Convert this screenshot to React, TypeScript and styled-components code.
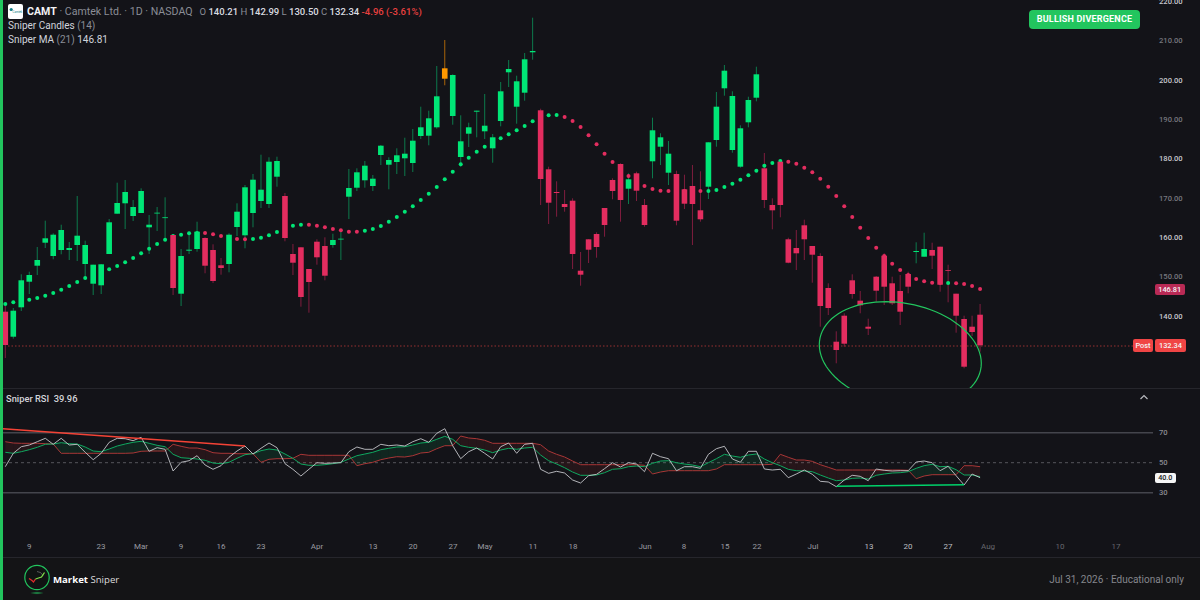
import React from 'react'
import styled, { createGlobalStyle } from 'styled-components'

const GlobalStyle = createGlobalStyle`
  html, body {
    margin: 0;
    padding: 0;
    width: 1200px;
    height: 600px;
    overflow: hidden;
    background: #131318;
    font-family: Roboto, "Liberation Sans", sans-serif;
  }
`

const GREEN = '#00e676'
const RED = '#e32d5f'
const ORANGE = '#ff9800'

const slot = (i: number) => 5.3 + 7.99 * i

// high, body top, body bottom, low, colour
type Candle = [number, number, number, number, string]
const CANDLES: Candle[] = [
  [306, 311.7, 345, 358, 'r'], [308, 310.7, 336.7, 338.7, 'g'], [274.3, 280.3, 307.3, 311, 'g'], [271.7, 275, 281.7, 294, 'g'],
  [247, 260, 265.7, 275, 'g'], [220.7, 238.3, 242.7, 248, 'g'], [233.3, 234.7, 256, 259.3, 'g'], [224.7, 230, 250, 254.3, 'g'],
  [242, 248, 250, 260, 'g'], [196, 235.7, 245, 261, 'g'], [240.7, 245, 264, 278.3, 'g'], [264.7, 264.7, 283.7, 295, 'g'],
  [264, 264.3, 285.3, 294, 'g'], [219, 222.3, 254, 254, 'g'], [182.7, 203, 213.7, 213.7, 'g'], [180, 192, 203.3, 229, 'g'],
  [200, 207, 216, 221, 'g'], [188.3, 191, 213, 213, 'g'], [215, 224.7, 227.3, 254, 'g'], [207, 212.7, 213.4, 231, 'g'],
  [197.3, 217.3, 218, 240, 'g'], [234, 235, 288, 295, 'r'], [249, 256, 293.7, 306, 'g'], [231.7, 249.7, 250.7, 254, 'g'],
  [221.7, 231.7, 249, 251.7, 'g'], [237.3, 238, 265.7, 273.3, 'r'], [244.3, 250, 281, 283, 'r'], [258, 265.3, 268, 274.7, 'r'],
  [233.3, 234.7, 264, 272.3, 'g'], [203.3, 211.7, 227, 236, 'g'], [185, 187.3, 235.3, 248.3, 'g'], [174, 179.7, 213, 227.3, 'g'],
  [154.7, 189.7, 201, 208, 'g'], [157.3, 161.7, 204, 208, 'g'], [156.7, 161, 176.7, 186.7, 'g'], [193, 196, 238, 241.3, 'r'],
  [244, 254, 262.7, 275, 'r'], [247.3, 247.3, 297, 306.7, 'r'], [269, 269, 282, 312.7, 'r'], [239.3, 241.7, 257.3, 264.7, 'r'],
  [237.3, 246, 275.7, 280.3, 'r'], [233.7, 240, 245, 247.7, 'g'], [230, 238.7, 239.4, 260, 'g'], [169, 188, 196.7, 219, 'g'],
  [168.3, 172.3, 187.7, 191, 'g'], [161, 165.7, 180.3, 187.7, 'g'], [175, 178.7, 186, 191, 'g'], [145, 145.7, 155, 165, 'g'],
  [157.3, 160, 164.7, 189.3, 'g'], [148.3, 155.3, 162, 174, 'g'], [137.7, 153.7, 158.3, 176, 'g'], [129, 140.7, 163, 172, 'g'],
  [106.7, 127.3, 136, 139, 'g'], [110.7, 118.3, 135.7, 145.3, 'g'], [66, 96.3, 127.3, 128.7, 'g'], [40, 68.3, 78.7, 85.3, 'o'],
  [74.3, 75, 116, 124.7, 'g'], [115.3, 141.3, 157, 166.7, 'g'], [122.7, 127.3, 133.7, 147, 'g'], [110.7, 110.7, 111.7, 137.3, 'g'],
  [94, 125.7, 131.3, 139, 'g'], [134, 137.3, 148.3, 162.7, 'g'], [82, 91.3, 121, 126.3, 'g'], [60, 69, 72.3, 87, 'g'],
  [75.7, 81.3, 106.7, 123.7, 'g'], [53, 59.3, 92.7, 100.7, 'g'], [17.7, 51, 52.3, 59.7, 'g'], [108.7, 110.3, 179, 205, 'r'],
  [166.7, 169.3, 202.7, 224, 'r'], [181.3, 192, 193, 216.7, 'r'], [190, 204, 207, 211.7, 'r'], [198.3, 200.7, 254, 269, 'r'],
  [252, 270.7, 274.7, 285.7, 'r'], [239.3, 239.3, 249.7, 263, 'r'], [232.3, 234, 247, 257.7, 'r'], [208, 208, 225, 236.7, 'r'],
  [178.3, 180, 191, 199.3, 'r'], [163.3, 164, 200, 221.7, 'r'], [173.3, 179.3, 188.7, 204, 'g'], [171.7, 173.3, 190.7, 201, 'r'],
  [199, 205, 225, 226.7, 'r'], [117.7, 130.3, 161.3, 178.3, 'g'], [133.3, 137.3, 146.7, 165, 'g'], [141, 153.7, 172.7, 185, 'g'],
  [170.7, 174, 220.7, 225.3, 'r'], [174.7, 189.3, 203.7, 209, 'r'], [165, 186, 204, 245, 'r'], [171.3, 210.3, 219.3, 221.7, 'r'],
  [142.3, 142.3, 186.7, 199, 'g'], [92, 106.7, 140, 146.7, 'g'], [65, 70.7, 88.3, 95.7, 'g'], [91.3, 96, 150, 152.7, 'g'],
  [125.3, 128.3, 166.7, 167.7, 'g'], [96.7, 100, 122.3, 127.3, 'g'], [66.7, 74.3, 97.7, 101.3, 'g'], [153, 168.3, 200, 208, 'r'],
  [198.3, 205, 210.3, 229.3, 'r'], [160, 161.7, 205, 217.3, 'r'], [237.7, 239.3, 262.7, 263.3, 'r'], [230, 248, 253.3, 270, 'r'],
  [219.7, 225.3, 239.3, 260, 'r'], [246, 246, 254.7, 282.7, 'r'], [253.3, 256, 306, 326.7, 'r'], [283.3, 288, 308, 315, 'r'],
  [331.3, 341.7, 350, 363.3, 'r'], [313.3, 315.7, 343.7, 346.7, 'r'], [274.3, 280.3, 294, 298.7, 'r'], [291, 300.7, 305.3, 313.3, 'r'],
  [318.7, 326.7, 328.7, 335, 'r'], [276, 276.7, 290.7, 301.7, 'r'], [253.3, 255.7, 286.7, 305, 'r'], [276.7, 283.3, 303.3, 305, 'r'],
  [275, 291, 311.7, 325, 'r'], [271.7, 274, 286.7, 293.3, 'r'], [242.3, 251, 252, 263.3, 'g'], [232.7, 249, 256.7, 256.7, 'g'],
  [242.7, 250, 255.7, 269, 'r'], [246.7, 246.7, 284.7, 291.7, 'r'], [264.7, 270, 270.7, 302.3, 'r'], [293.7, 293.7, 315.7, 332.7, 'r'],
  [315.7, 319, 366.7, 368.3, 'r'], [315.7, 326.7, 332, 336, 'r'], [304, 314.7, 345.3, 351.7, 'r'],
]

// moving average: y and colour for each slot
const MA_Y = [
  304, 302.3, 300.6, 299.7, 298, 295.7, 293, 289.7, 286, 282, 278, 275, 272, 269.3, 266, 262.3, 258, 253.3, 248.7, 244, 239.7, 236, 234.7, 233.3,
  233, 233, 234.3, 236, 237.5, 239, 239.3, 239, 237.7, 235.3, 232, 228.7, 225.7, 224.7, 224.7, 225.7, 227.3, 229, 230.3, 231.7, 231.7, 230.7, 229, 226, 221.7, 217,
  211.7, 206.3, 200, 193.7, 187, 179.3, 171.7, 164.3, 157.7, 151.7, 146.7, 142.7, 138.3, 134.3, 130.3, 126, 121.3, 117, 115.3, 115, 117, 121, 127, 135.3, 144.3, 153.7, 162, 169, 176, 181, 186, 189, 190.7, 191, 191, 191, 191, 191, 191, 190, 187, 183.7, 179.7, 175.3, 170.7, 165.7, 163, 161, 161.7, 163.7,
  167.7, 172.3, 178.7, 186.7, 196, 206.3, 217, 227.7, 238, 247.7, 256, 263.7, 270, 275, 279, 281.3, 282.7, 283, 283, 283.3, 284, 286, 289,
]
const MA_RED_RANGES = [[25, 30], [38, 44], [70, 87], [98, 117], [119, 122]]
const maColor = (i: number) => (MA_RED_RANGES.some(([a, b]) => i >= a && i <= b) ? RED : GREEN)

const from385 = (a: number[]) => a.map(z => 385 + z / 3)
const from410 = (a: number[]) => a.map(z => 410 + z / 3)

const RSI_WHITE = [
  ...from385([245, 205, 185, 180, 170, 160, 178, 160, 180, 178, 202, 224, 205, 172, 160, 161, 167, 157, 199, 188, 193, 258, 232, 227, 212, 240, 253, 242, 217, 198, 183, 207, 190, 174, 188, 236, 253, 273, 253, 233, 235, 234, 233, 200, 186, 193, 193, 178, 182, 180]),
  ...from410([108, 95, 86, 97, 70, 56, 107, 146, 125, 114, 130, 147, 110, 99, 130, 103, 100, 178, 190, 184, 189, 210, 219, 197, 193, 176, 158, 171, 158, 162, 185, 130, 140, 146, 182, 170, 170, 175, 133, 116, 109, 147, 157, 124, 124, 177, 180, 178, 203, 192]),
  ...from385([255, 268, 289, 291, 305, 285, 271, 274, 287, 252, 256, 258, 257, 257, 231, 228, 233, 257, 244, 272, 300, 267, 278]),
]
const RSI_GREEN = [
  ...from385([202, 205, 200, 194, 187, 178, 177, 173, 176, 177, 186, 198, 200, 192, 183, 177, 172, 169, 175, 181, 185, 208, 218, 220, 222, 226, 234, 236, 232, 220, 209, 206, 197, 192, 195, 207, 220, 237, 241, 241, 239, 236, 232, 222, 212, 207, 202, 194, 190, 186]),
  ...from410([110, 105, 99, 97, 88, 79, 88, 107, 112, 115, 120, 128, 120, 115, 118, 114, 112, 135, 152, 162, 173, 186, 196, 196, 195, 188, 178, 176, 170, 168, 170, 160, 153, 152, 158, 162, 165, 170, 158, 146, 133, 138, 142, 135, 132, 147, 158, 167, 178, 182]),
  ...from385([258, 260, 270, 279, 287, 285, 280, 279, 282, 271, 267, 264, 263, 260, 250, 242, 238, 245, 244, 254, 270, 270, 275]),
]
const RSI_RED = [
  ...from385([170, 174, 175, 175, 175, 176, 177, 205, 205, 205, 205, 205, 205, 205, 205, 205, 204, 199, 198, 198, 198, 178, 184, 189, 189, 194, 203, 205, 205, 206, 206, 206, 232, 223, 221, 221, 220, 208, 211, 211, 211, 211, 211, 211, 242, 236, 232, 224, 219, 215]),
  ...from410([141, 137, 129, 127, 116, 107, 107, 78, 84, 86, 91, 100, 100, 100, 100, 100, 100, 104, 123, 133, 141, 153, 164, 164, 164, 164, 164, 164, 164, 164, 166, 192, 186, 182, 182, 182, 182, 182, 182, 177, 164, 164, 164, 164, 164, 164, 163, 133, 142, 150]),
  ...from385([225, 229, 239, 247, 255, 255, 255, 255, 255, 255, 255, 255, 255, 256, 281, 273, 269, 269, 269, 269, 242, 242, 245]),
]

const line = (ys: number[]) => ys.map((y, i) => `${slot(i).toFixed(1)},${y.toFixed(1)}`).join(' ')

const PRICE_TICKS = ['220.00', '210.00', '200.00', '190.00', '180.00', '170.00', '160.00', '150.00', '140.00']
type Tone = 'normal' | 'bright' | 'dim'
const TIME_TICKS: [string, number, Tone][] = [
  ['9', 29.3, 'normal'], ['23', 101, 'normal'], ['Mar', 141, 'normal'], ['9', 181, 'normal'], ['16', 221, 'normal'], ['23', 261, 'normal'],
  ['Apr', 317, 'normal'], ['13', 373, 'normal'], ['20', 413, 'normal'], ['27', 453, 'normal'], ['May', 485, 'normal'], ['11', 533, 'normal'],
  ['18', 573, 'normal'], ['Jun', 645, 'normal'], ['8', 684, 'normal'], ['15', 725, 'normal'], ['22', 757, 'normal'], ['Jul', 813, 'normal'],
  ['13', 869, 'bright'], ['20', 908, 'bright'], ['27', 948, 'bright'], ['Aug', 988, 'dim'], ['10', 1060, 'dim'], ['17', 1116, 'dim'],
]
const TONES: Record<Tone, string> = { normal: '#9a9ba1', bright: '#bdbec2', dim: '#66676d' }

const Page = styled.div`
  display: flex;
  width: 1200px;
  height: 600px;
  background: #131318;
`

const SideBar = styled.div`
  width: 3px;
  flex: none;
  background: #22c55e;
`

const Column = styled.div`
  flex: 1;
  display: flex;
  flex-direction: column;
  min-width: 0;
`

const MainPane = styled.section`
  position: relative;
  height: 388px;
  overflow: hidden;
  border-bottom: 1px solid #26262c;
`

const RsiPane = styled.section`
  position: relative;
  height: 143px;
  overflow: hidden;
`

const ChartSvg = styled.svg`
  position: absolute;
  inset: 0;
  display: block;
`

const Legend = styled.div`
  position: absolute;
  top: 4px;
  left: 5px;
  display: flex;
  flex-direction: column;
`

const LegendRow = styled.div`
  display: flex;
  align-items: center;
  height: 14px;
  font-size: 10px;
  line-height: 14px;
  color: #d1d4dc;
  white-space: pre;
  &:first-child {
    height: 15px;
    font-size: 10.6px;
  }
`

const Ticker = styled.b`
  margin-left: 4px;
  font-size: 10.6px;
  font-weight: 700;
  color: #f2f2f4;
`

const Muted = styled.span`
  color: #8a8d96;
`

const Ohlc = styled.span`
  margin-left: 7px;
  font-size: 9.5px;
  font-weight: 500;
  color: #d9dbe0;
`

const OhlcKey = styled.span`
  font-weight: 400;
  color: #8a8d96;
`

const Loss = styled.span`
  font-size: 9.5px;
  font-weight: 500;
  color: #e8403f;
`

const SignalBadge = styled.div`
  position: absolute;
  top: 9.5px;
  left: 1026px;
  display: flex;
  align-items: center;
  justify-content: center;
  width: 111px;
  height: 19.5px;
  border-radius: 4px;
  background: #22c55e;
  color: #fff;
  font-size: 9px;
  font-weight: 700;
  letter-spacing: 0.2px;
`

const PriceAxis = styled.div`
  position: absolute;
  top: -18px;
  left: 1156px;
  display: flex;
  flex-direction: column;
`

const PriceTick = styled.span<{ $major: boolean }>`
  display: flex;
  align-items: center;
  height: 39.33px;
  font-size: 7.6px;
  font-weight: 500;
  color: ${props => (props.$major ? '#c8c9ce' : '#77787f')};
`

const PriceTag = styled.span<{ $bg: string; $top: number; $left: number; $w: number; $h: number }>`
  position: absolute;
  top: ${props => props.$top}px;
  left: ${props => props.$left}px;
  width: ${props => props.$w}px;
  height: ${props => props.$h}px;
  border-radius: 2px;
  background: ${props => props.$bg};
  color: #f4f4f6;
  font-size: 7.4px;
  font-weight: 500;
  line-height: ${props => props.$h}px;
  text-align: center;
`

const RsiTitle = styled.div`
  position: absolute;
  top: 3px;
  left: 3px;
  font-size: 9.3px;
  line-height: 13px;
  font-weight: 500;
  color: #d4d5da;
  white-space: pre;
`

const RsiAxis = styled.div`
  position: absolute;
  top: 28px;
  left: 1156px;
  display: flex;
  flex-direction: column;
`

const RsiTick = styled.span`
  display: flex;
  align-items: center;
  height: 30px;
  font-size: 7.6px;
  font-weight: 500;
  color: #8b8c93;
`

const RsiValue = styled.span`
  position: absolute;
  top: 83.7px;
  left: 1152px;
  width: 20.7px;
  height: 10.5px;
  border-radius: 2px;
  background: #f5f5f5;
  color: #222;
  font-size: 7.2px;
  font-weight: 500;
  line-height: 10.5px;
  text-align: center;
`

const CollapseIcon = styled.svg`
  position: absolute;
  top: 5px;
  left: 1136px;
`

const TimeAxis = styled.div`
  position: relative;
  height: 25px;
  border-bottom: 1px solid #26262c;
`

const TimeTick = styled.span<{ $tone: Tone }>`
  position: absolute;
  top: 8px;
  transform: translateX(-50%);
  font-size: 8px;
  line-height: 13px;
  color: ${props => TONES[props.$tone]};
`

const Footer = styled.footer`
  flex: 1;
  display: flex;
  align-items: center;
  padding: 0 16px 0 19px;
  background: #141416;
`

const Brand = styled.div`
  display: flex;
  align-items: center;
  gap: 1px;
  font-family: "Open Sans", Roboto, sans-serif;
  font-size: 9.6px;
  color: #dcdcdc;
`

const BrandStrong = styled.b`
  font-weight: 700;
  color: #fff;
`

const FooterNote = styled.span`
  margin-left: auto;
  font-size: 10px;
  color: #85868c;
`

// green circle around the divergence: centre, half width and tilt fitted on the picture
const ELLIPSE_POINTS = Array.from({ length: 90 }, (_, k) => {
  const t = (k / 90) * Math.PI * 2
  const x = 900.3 + 81 * Math.cos(t)
  const y = 354 + 9.3 * Math.cos(t) + 51.5 * Math.sin(t)
  return `${x.toFixed(1)},${y.toFixed(1)}`
}).join(' ')

const CompanyLogo = () => (
  <svg width="15" height="15" viewBox="0 0 15 15">
    <rect width="15" height="15" rx="2" fill="#fff" />
    <circle cx="3.2" cy="5.5" r="1.6" fill="#0e7c86" />
    <text x="4.6" y="8.6" fontFamily="Roboto, sans-serif" fontSize="2.8" fill="#0e7c86">Camtek</text>
  </svg>
)

const BrandLogo = () => (
  <svg width="30" height="34" viewBox="0 0 30 34">
    <defs>
      <radialGradient id="glow">
        <stop offset="0" stopColor="#22c55e" stopOpacity="0.8" />
        <stop offset="1" stopColor="#22c55e" stopOpacity="0" />
      </radialGradient>
    </defs>
    <ellipse cx="15" cy="31" rx="7" ry="1.6" fill="url(#glow)" />
    <circle cx="15" cy="15.5" r="12.2" fill="#101413" stroke="#22c55e" strokeWidth="1.2" />
    <path d="M15 9.5a7 7 0 0 1 6 4" fill="none" stroke="#777" strokeWidth="0.7" />
    <path d="M7 16.5l3 2 1.5 1.5 2-3" fill="none" stroke="#e02b2b" strokeWidth="1.3" />
    <path d="M13.5 17l3-1 3-1 3-4.5" fill="none" stroke="#7ee04a" strokeWidth="1.3" />
  </svg>
)

const PriceChart = () => (
  <ChartSvg width="1197" height="388" viewBox="3 0 1197 388">
    {CANDLES.map(([h, , , l, c], i) => (
      <line
        key={i}
        x1={slot(i)}
        x2={slot(i)}
        y1={h}
        y2={l}
        strokeWidth="1"
        stroke={c === 'g' ? '#0d7a4c' : c === 'r' ? '#7f1d3e' : '#a86508'}
      />
    ))}
    {MA_Y.map((y, i) => (
      <circle key={i} cx={slot(i)} cy={y} r="2" fill={maColor(i)} />
    ))}
    {CANDLES.map(([, t, b, , c], i) => (
      <rect
        key={i}
        x={slot(i) - 2.8}
        y={t}
        width="5.6"
        height={Math.max(b - t, 0.8)}
        fill={c === 'g' ? GREEN : c === 'r' ? RED : ORANGE}
      />
    ))}
    <line x1="8" x2="1133" y1="346" y2="346" stroke="#f04545" strokeOpacity="0.6" strokeWidth="1" strokeDasharray="1.5 2" />
    <polygon points={ELLIPSE_POINTS} fill="none" stroke="#22c55e" strokeWidth="1.2" />
  </ChartSvg>
)

const RsiChart = () => {
  const bands = RSI_GREEN.slice(0, -1).map((g, i) => {
    const r = RSI_RED[i]
    const g2 = RSI_GREEN[i + 1]
    const r2 = RSI_RED[i + 1]
    const a = slot(i).toFixed(1)
    const b = slot(i + 1).toFixed(1)
    const bullish = g + g2 < r + r2
    return (
      <polygon
        key={i}
        points={`${a},${g} ${b},${g2} ${b},${r2} ${a},${r}`}
        fill={bullish ? '#00e676' : '#e53935'}
        fillOpacity={bullish ? 0.09 : 0.09}
      />
    )
  })
  return (
    <ChartSvg width="1197" height="143" viewBox="3 389 1197 143">
      <line x1="3" x2="1153" y1="432.7" y2="432.7" stroke="#44454c" strokeWidth="1.5" />
      <line x1="3" x2="1153" y1="462.7" y2="462.7" stroke="#55565c" strokeWidth="1" strokeDasharray="3 3" />
      <line x1="3" x2="1153" y1="492.7" y2="492.7" stroke="#44454c" strokeWidth="1.5" />
      {bands}
      <polyline points={line(RSI_RED)} fill="none" stroke="#a83636" strokeWidth="1" />
      <polyline points={line(RSI_GREEN)} fill="none" stroke="#0fa860" strokeWidth="1" />
      <polyline points={line(RSI_WHITE)} fill="none" stroke="#c4c5c9" strokeWidth="0.9" />
      <line x1="2" x2="245" y1="428.7" y2="446" stroke="#f44336" strokeWidth="1.5" />
      <line x1="836.7" x2="964" y1="486.3" y2="484.7" stroke="#00d26a" strokeWidth="1.5" />
    </ChartSvg>
  )
}

export default function App() {
  return (
    <Page>
      <GlobalStyle />
      <SideBar />
      <Column>
        <MainPane>
          <PriceChart />
          <Legend>
            <LegendRow>
              <CompanyLogo />
              <Ticker>CAMT</Ticker>
              <Muted> · Camtek Ltd. · 1D · NASDAQ</Muted>
              <Ohlc>
                <OhlcKey>O</OhlcKey> 140.21 <OhlcKey>H</OhlcKey> 142.99 <OhlcKey>L</OhlcKey> 130.50 <OhlcKey>C</OhlcKey> 132.34 <Loss>-4.96 (-3.61%)</Loss>
              </Ohlc>
            </LegendRow>
            <LegendRow>Sniper Candles <Muted>(14)</Muted></LegendRow>
            <LegendRow>Sniper MA <Muted>(21)</Muted> 146.81</LegendRow>
          </Legend>
          <SignalBadge>BULLISH DIVERGENCE</SignalBadge>
          <PriceAxis>
            {PRICE_TICKS.map((t, i) => (
              <PriceTick key={t} $major={i % 2 === 0}>{t}</PriceTick>
            ))}
          </PriceAxis>
          <PriceTag $bg="#b92a55" $top={283.5} $left={1152} $w={29.5} $h={11}>146.81</PriceTag>
          <PriceTag $bg="#f04545" $top={339} $left={1130} $w={20} $h={13}>Post</PriceTag>
          <PriceTag $bg="#f04545" $top={339} $left={1152} $w={31} $h={13}>132.34</PriceTag>
        </MainPane>
        <RsiPane>
          <RsiChart />
          <RsiTitle>Sniper RSI  39.96</RsiTitle>
          <CollapseIcon width="10" height="6" viewBox="0 0 10 6">
            <path d="M1.5 5L5 1.5 8.5 5" fill="none" stroke="#b8b9be" strokeWidth="1.2" />
          </CollapseIcon>
          <RsiAxis>
            <RsiTick>70</RsiTick>
            <RsiTick>50</RsiTick>
            <RsiTick>30</RsiTick>
          </RsiAxis>
          <RsiValue>40.0</RsiValue>
        </RsiPane>
        <TimeAxis>
          {TIME_TICKS.map(([t, x, tone], i) => (
            <TimeTick key={i} $tone={tone} style={{ left: x - 3 }}>{t}</TimeTick>
          ))}
        </TimeAxis>
        <Footer>
          <Brand>
            <BrandLogo />
            <span><BrandStrong>Market</BrandStrong> Sniper</span>
          </Brand>
          <FooterNote>Jul 31, 2026 · Educational only</FooterNote>
        </Footer>
      </Column>
    </Page>
  )
}
